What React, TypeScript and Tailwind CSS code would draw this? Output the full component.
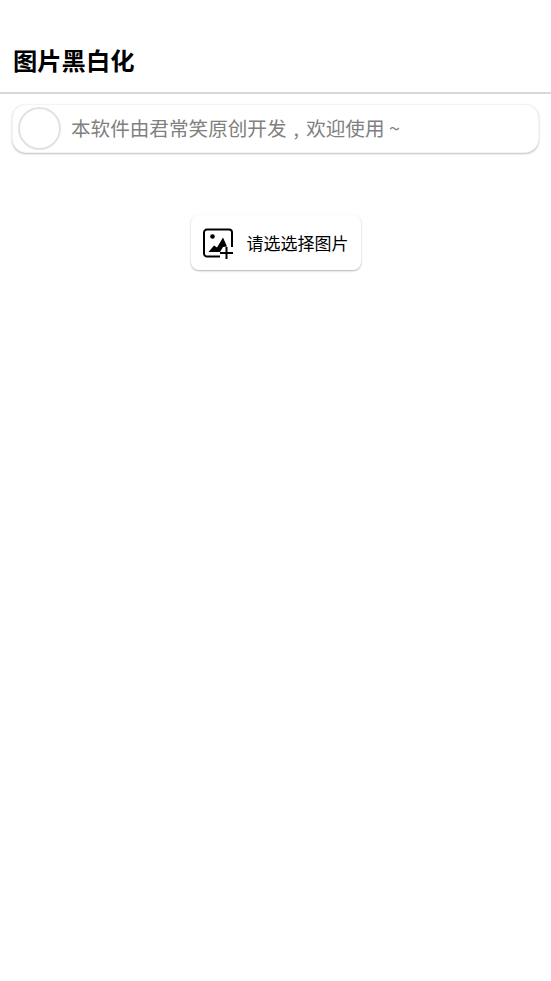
import React from 'react';

const font = { fontFamily: '"Noto Sans CJK SC", "Liberation Sans", sans-serif' };

const AddImageIcon: React.FC = () => (
  <svg width="32" height="32" viewBox="0 0 32 32" fill="none" className="shrink-0">
    <path d="M17 29.500H4a3 3 0 0 1-3-3V5.500a3 3 0 0 1 3-3h22a3 3 0 0 1 3 3V20" stroke="#000" strokeWidth="2" />
    <circle cx="9.500" cy="9.500" r="2.300" fill="#000" />
    <path d="M5.500 25l5.500-6.500 3 2L20 10.500l4 9-4 .5-3 5z" fill="#000" />
    <path d="M23.500 20v12M17 26h13" stroke="#000" strokeWidth="2" />
  </svg>
);

export default function App() {
  return (
    <div className="min-h-[981px] bg-white text-black" style={font}>
      <div className="h-[94px] flex items-end pb-[15px] pl-[13px] border-b-2 border-[#d8d8d8]">
        <h1 className="text-[24.3px] leading-[34px] font-bold">图片黑白化</h1>
      </div>

      {/* notice bar */}
      <div className="mx-[12px] mt-[10px] h-[49px] flex items-center rounded-[14px] bg-white border border-[#f4f4f4] shadow-[0_1px_2px_rgba(0,0,0,0.25)]">
        <div className="ml-[5px] w-[43px] h-[43px] rounded-full bg-white border-2 border-[#e2e2e2]" />
        <span className="ml-[10px] mb-[2px] text-[19.6px] text-[#808080] whitespace-nowrap">
          本软件由君常笑原创开发<span className="inline-block w-[1em] text-center">,</span>欢迎使用 ~
        </span>
      </div>

      <div className="flex justify-center mt-[62px]">
        <button className="w-[170px] h-[55px] flex items-center pl-[12px] gap-[12px] rounded-[8px] bg-white shadow-[0_1px_2px_rgba(0,0,0,0.3)]">
          <AddImageIcon />
          <span className="text-[17px] whitespace-nowrap">请选选择图片</span>
        </button>
      </div>
    </div>
  );
}
